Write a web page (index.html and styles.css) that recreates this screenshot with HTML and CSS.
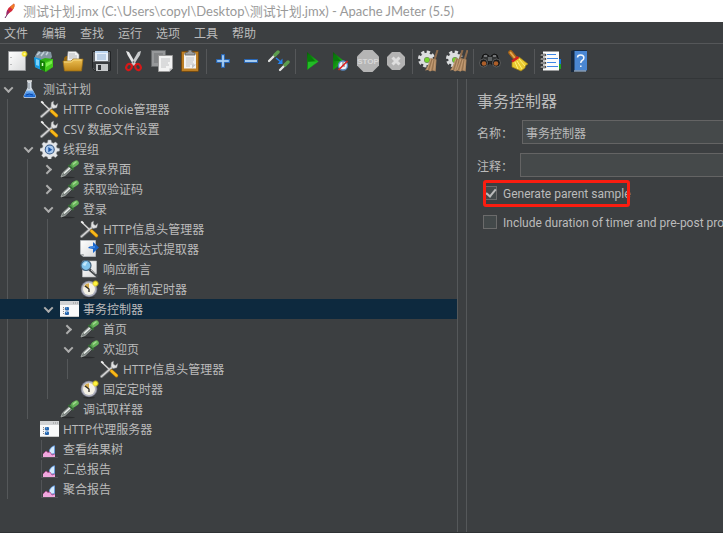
FILE: index.html
```html
<!DOCTYPE html>
<html lang="zh-CN">
<head>
    <meta charset="UTF-8">
    <meta name="viewport" content="width=device-width, initial-scale=1.0">
    <title>测试计划.jmx - Apache JMeter (5.5)</title>
    <link rel="stylesheet" href="styles.css">
</head>
<body>
    <!-- Shared icons -->
    <svg class="sprite" aria-hidden="true">
        <defs>
            <linearGradient id="g-liquid" x1="0" y1="0" x2="0" y2="1">
                <stop offset="0" stop-color="#7db8f5"/>
                <stop offset="1" stop-color="#0d5fd0"/>
            </linearGradient>
            <linearGradient id="g-green" x1="0" y1="0" x2="1" y2="1">
                <stop offset="0" stop-color="#0a5c0a"/>
                <stop offset="0.6" stop-color="#16a716"/>
                <stop offset="1" stop-color="#3fd83f"/>
            </linearGradient>
            <linearGradient id="g-folder" x1="0" y1="0" x2="0" y2="1">
                <stop offset="0" stop-color="#edc053"/>
                <stop offset="1" stop-color="#bd8417"/>
            </linearGradient>
            <linearGradient id="g-paper" x1="0" y1="0" x2="1" y2="1">
                <stop offset="0" stop-color="#ffffff"/>
                <stop offset="1" stop-color="#d9dadb"/>
            </linearGradient>
            <radialGradient id="g-glow">
                <stop offset="0" stop-color="#ffffc0"/>
                <stop offset="0.5" stop-color="#f6e21c"/>
                <stop offset="1" stop-color="#f6e21c" stop-opacity="0"/>
            </radialGradient>
            <symbol id="flask" viewBox="0 0 20 20">
                <path d="M7.500 2.500h4v6l4.500 8.500q.4 2-1.500 2h-9.500q-2 0-1.500-2l4-8.500z" fill="#d5dde5"/>
                <path d="M6.500 11.500h6.500l2.500 5q.6 1.800-1.200 1.800h-9q-1.800 0-1.200-1.800z" fill="url(#g-liquid)"/>
                <path d="M7 2h5" stroke="#f5f5f5" stroke-width="1.400"/>
                <path d="M9 4v6" stroke="#88929b" stroke-width="1"/>
                <path d="M6 16q3-2 7 0" stroke="#0643a8" fill="none"/>
            </symbol>
            <symbol id="tools" viewBox="0 0 20 20">
                <path d="M1.500 17.500L13 7.500" stroke="#77797b" stroke-width="3" stroke-linecap="round"/>
                <path d="M1.500 17.500L13 7.500" stroke="#d6d7d8" stroke-width="1.600" stroke-linecap="round"/>
                <path d="M17.800 4.500l-2.500 2-2-1.500.3-3-2.300 1.500-.3 4 2.300 2 3.500-.8z" fill="#e2e3e4" stroke="#8d8f91" stroke-width=".5"/>
                <path d="M1.500 3L10 11" stroke="#d8d8d8" stroke-width="1.500"/>
                <path d="M.5 3l1.500-1.200 2 2-1 1z" fill="#f3f3f3"/>
                <path d="M11.500 12l5 4.800" stroke="#b77a00" stroke-width="3.400" stroke-linecap="round"/>
                <path d="M11.500 12l5 4.500" stroke="#f8b91b" stroke-width="2.400" stroke-linecap="round"/>
            </symbol>
            <symbol id="gear" viewBox="0 0 20 20">
                <path d="M8 1h3l.6 2.500 1.800.7L15.600 3l2 2-1.300 2.200.7 1.700 2.500.6v2.500l-2.500.6-.7 1.800 1.300 2.100-2.100 2.100-2.100-1.300-1.800.7-.6 2.400H8.200l-.7-2.400-1.700-.7-2.200 1.300-2-2.100 1.300-2.200-.8-1.700L0 12V9.400l2.300-.6.8-1.700L1.800 5l2-2.100L6 4.200l1.600-.7z" fill="#e4e6e9" stroke="#9a9ea3" stroke-width=".5"/>
                <circle cx="9.700" cy="10.500" r="5" fill="#30527f"/>
                <circle cx="9.700" cy="10.500" r="4" fill="#a8c8ee"/>
                <path d="M8.300 8l4 2.700-4 2.500z" fill="#1f56a4"/>
            </symbol>
            <symbol id="dropper" viewBox="0 0 20 20">
                <ellipse cx="8" cy="18.500" rx="7" ry=".8" fill="#292b2c"/>
                <path d="M1 18l1.500-4 8-7.500 2.500 2.500-8 7.500z" fill="#77807c" stroke="#b1b6b3" stroke-width=".8"/>
                <path d="M4 14.500l6.500-6" stroke="#f1f3f2" stroke-width="1.500"/>
                <path d="M8.500 6l5 5" stroke="#356b34" stroke-width="2"/>
                <path d="M11.500 8l3.500-4" stroke="#4f9849" stroke-width="4.500"/>
                <path d="M14 5.300l2.300-1.500" stroke="#67b35b" stroke-width="5" stroke-linecap="round"/>
                <path d="M13.500 5l2.500-2" stroke="#a5dc91" stroke-width="1.500" stroke-linecap="round"/>
            </symbol>
            <symbol id="extract" viewBox="0 0 20 20">
                <path d="M.5 1.500h15v16H3l-2.500-2.500z" fill="url(#g-paper)" stroke="#bfc3c8" stroke-width=".7"/>
                <path d="M.7 15h3v2.500" fill="#a3a7aa"/>
                <path d="M8 9q1-2 5-2V3l6 5.500-6 5.500v-4q-3-.6-5-1z" fill="#1764cb"/>
                <path d="M10 8h5" stroke="#65a6f1"/>
            </symbol>
            <symbol id="search" viewBox="0 0 20 20">
                <path d="M2.500 2h14v16h-14z" fill="url(#g-paper)" stroke="#b9bcbf" stroke-width=".6"/>
                <path d="M10 11l7 6" stroke="#44484b" stroke-width="2.600" stroke-linecap="round"/>
                <path d="M11 11l5 4" stroke="#c7c9ca" stroke-width="1"/>
                <circle cx="6" cy="6.500" r="5" fill="#82c5ed" stroke="#44627c" stroke-width="1.200"/>
                <path d="M2.800 6q1-3.300 4.500-3l-2 4z" fill="#c5e9fc"/>
            </symbol>
            <symbol id="clock" viewBox="0 0 20 20">
                <ellipse cx="9" cy="18.800" rx="6" ry=".8" fill="#292b2c"/>
                <circle cx="9" cy="10" r="8.300" fill="#777989"/>
                <circle cx="9" cy="10" r="7.500" fill="#b2b4c0"/>
                <circle cx="9" cy="10" r="6" fill="#f5f2e5"/>
                <path d="M9 10V4.200A6 6 0 0 0 4 7.300z" fill="#d5ab4d"/>
                <path d="M5 7l4 3v3" stroke="#302d2a" stroke-width="1.300" fill="none"/>
                <circle cx="15.500" cy="4.500" r="3.600" fill="url(#g-glow)"/>
                <circle cx="15.500" cy="4.500" r="1.800" fill="#fff33f"/>
            </symbol>
            <symbol id="window" viewBox="0 0 20 20">
                <path d="M0 2h19v16H0z" fill="#f8f9fa"/>
                <path d="M0 2h19v4H0z" fill="#d0d2d4"/>
                <path d="M13 4h1m1 0h1m1 0h1" stroke="#8b8d90"/>
                <path d="M0 17.500h19" stroke="#c7c9ca"/>
                <path d="M3.500 8v7h3M3.500 10h3" stroke="#888" fill="none" stroke-dasharray="1 1"/>
                <rect x="5" y="8" width="4" height="3.500" rx="1" fill="#2866ae"/>
                <rect x="5" y="12.500" width="4" height="3.500" rx="1" fill="#2866ae"/>
                <path d="M6 9h1m-1 4.500h1" stroke="#66b8f3"/>
            </symbol>
            <symbol id="chart" viewBox="0 0 20 20">
                <path d="M1.500 1.500v17h16" stroke="#686b6e" stroke-dasharray="1 1" fill="none"/>
                <path d="M9 18v-7q3-5 6-4.500V18z" fill="#6d9edb"/>
                <path d="M10 15v-4q2-4 4-3.500V14z" fill="#d7edff"/>
                <path d="M3 18v-3l3-3 2 1.500 2-.5 2 3 3-1v3z" fill="#f0a8de"/>
                <path d="M3 15l3-3 2 1.500 2-.5 2 3 3-1" stroke="#a94a8f" fill="none" stroke-width=".8"/>
            </symbol>
            <symbol id="small-broom" viewBox="0 0 22 22">
                <path d="M19.500 0l-3 10" stroke="#8d6a4b" stroke-width="2"/>
                <path d="M12.500 8l6 1.500-.8 12-3.200-1-2.500 1-2-1.500-3 .5 3-5z" fill="#ac8660"/>
                <path d="M13 9l-4 11M15 10l-3 11M17 10l-1 10" stroke="#cda67e" stroke-width=".7"/>
                <path d="M14 9l-3.500 11M16 10l-2 11" stroke="#80603f" stroke-width=".5"/>
            </symbol>
            <symbol id="cog" viewBox="0 0 22 22">
                <circle cx="8.500" cy="9" r="7" fill="none" stroke="#dcdedf" stroke-width="3" stroke-dasharray="3.200 2.300"/>
                <circle cx="8.500" cy="9" r="6.300" fill="#dcdedf"/>
                <circle cx="9" cy="10" r="3" fill="#6b8e52"/>
                <circle cx="9" cy="10" r="2.300" fill="#75d52b"/>
            </symbol>
        </defs>
    </svg>

    <div class="window">
        <header class="titlebar">
            <svg class="feather" viewBox="0 0 16 18">
                <path d="M3 16L12 2" stroke="#702b65" stroke-width="1"/>
                <path d="M4.500 13q-.5-4 2-7L12 1.500q1.500 3-2 7.500z" fill="#d52b3c"/>
                <path d="M8 5l4-3.500q1.500 3-1.500 6z" fill="#ee7b27"/>
                <path d="M4.500 13q-.5-3 1-5l2 2z" fill="#952b75"/>
            </svg>
            <span>测试计划.jmx (C:\Users\copyl\Desktop\测试计划.jmx) - Apache JMeter (5.5)</span>
        </header>

        <nav class="menubar">
            <button>文件</button>
            <button>编辑</button>
            <button>查找</button>
            <button>运行</button>
            <button>选项</button>
            <button>工具</button>
            <button>帮助</button>
        </nav>

        <div class="toolbar" role="toolbar" aria-label="工具栏">
            <div class="group">
                <button aria-label="新建"><svg viewBox="0 0 22 22">
                    <path d="M2.500 1.500h17v19h-17z" fill="url(#g-paper)" stroke="#96989a"/>
                    <path d="M5 7v1m0 6v1" stroke="#888"/>
                    <circle cx="18.500" cy="4" r="3.500" fill="url(#g-glow)"/>
                </svg></button>
                <button aria-label="模板"><svg viewBox="0 0 22 22">
                    <path d="M1 6l3-5 4 1 3-1 6 1 1 5-8 10-5 2-4-2z" fill="#8496a3"/>
                    <path d="M3 5l3-3M7 6l3-4M12 5l2-3" stroke="#c3d0da" stroke-width="1.500"/>
                    <path d="M0 7l7 2v11l-6-3z" fill="#169be2"/>
                    <path d="M2 9l3 1v6l-3-1z" fill="#7ad2fb"/>
                    <path d="M6 10l5-2 8 1v8l-7 5-6-3z" fill="#2fb014"/>
                    <path d="M6 10l5 2v9.500l-5-3z" fill="#138006"/>
                    <path d="M11 12l8-3v8l-8 4.500z" fill="#43c91c"/>
                    <path d="M12 13l6-2.500v3L12 17z" fill="#7aec4c"/>
                    <path d="M8.500 13v3" stroke="#d5ffc3" stroke-width="1.500"/>
                </svg></button>
                <button aria-label="打开"><svg viewBox="0 0 22 22">
                    <path d="M2 8l2-2h6v3h10v5H2z" fill="#94650c"/>
                    <path d="M6 1.500h8l3 3V13H5z" fill="#f3f3f3" stroke="#999" stroke-width=".6"/>
                    <path d="M7 4h6M7 6h8M7 8h8" stroke="#b4b6b8"/>
                    <path d="M1 11h8l2-2h10l-1.500 12H2.500z" fill="url(#g-folder)" stroke="#9c6d13" stroke-width=".7"/>
                    <path d="M2 12h7.500l2-2h8" stroke="#f6dc87" fill="none"/>
                </svg></button>
                <button aria-label="保存"><svg viewBox="0 0 22 22">
                    <path d="M2.500 1.500h18v19h-16l-2-2z" fill="#6c6f72" stroke="#222426"/>
                    <path d="M5 1h13v10H5z" fill="#eaf2fb"/>
                    <path d="M5 1h13v2H5z" fill="#bcd6f1"/>
                    <path d="M7 5h9M7 7h9M7 9h9" stroke="#90afd2"/>
                    <path d="M3 12h17v8H5l-2-2z" fill="#393c3f"/>
                    <path d="M6 14h12v7H6z" fill="#c5c8ca"/>
                    <path d="M8 15h3v5H8z" fill="#33363a"/>
                </svg></button>
            </div>
            <div class="separator"></div>
            <div class="group">
                <button aria-label="剪切"><svg viewBox="0 0 22 22">
                    <path d="M3 1l3 1 7 12-2 2L4.500 5z" fill="#e5e6e7"/>
                    <path d="M18 1l-3 1-7 12 2 2L17 5z" fill="#c9cbcd"/>
                    <circle cx="10.500" cy="12" r=".8" fill="#555"/>
                    <ellipse cx="6" cy="17" rx="2.600" ry="3.200" fill="none" stroke="#d61818" stroke-width="2.200" transform="rotate(30 6 17)"/>
                    <ellipse cx="15" cy="17" rx="2.600" ry="3.200" fill="none" stroke="#d61818" stroke-width="2.200" transform="rotate(-30 15 17)"/>
                </svg></button>
                <button aria-label="复制"><svg viewBox="0 0 22 22">
                    <path d="M.5 .5h14v16H.5z" fill="#96989a" stroke="#686b6d"/>
                    <path d="M3 4h9M3 6h8M3 8h5M3 10h5M3 12h5" stroke="#6e7173"/>
                    <path d="M7.500 5.500h14v13l-3 3h-11z" fill="#f2f2f2" stroke="#999"/>
                    <path d="M10 9h9M10 11h9M10 13h7M10 15h8M10 17h5" stroke="#b6b8ba" stroke-width=".8"/>
                    <path d="M18.500 21.500v-3h3z" fill="#b5b7b9"/>
                </svg></button>
                <button aria-label="粘贴"><svg viewBox="0 0 22 22">
                    <rect x="2.500" y="1.500" width="17" height="20" rx="1" fill="#bd7f24" stroke="#754b12"/>
                    <path d="M5 3.500h12v15H5z" fill="#f2f2f2"/>
                    <path d="M7 8h8M7 10h8M7 12h7M7 14h8M7 16h4" stroke="#b5b7b9" stroke-width=".8"/>
                    <path d="M13 18.500v-4h4z" fill="#c2c4c6"/>
                    <path d="M6 5V3l3-1 1-2h2l1 2 3 1v2z" fill="#9b9d9f" stroke="#5d5f61" stroke-width=".8"/>
                </svg></button>
            </div>
            <div class="separator"></div>
            <div class="group">
                <button aria-label="展开"><svg viewBox="0 0 22 22">
                    <path d="M9.500 4.500h3v5h5v3h-5v5h-3v-5h-5v-3h5z" fill="#82b3e7" stroke="#2865b3"/>
                    <path d="M11 6v10M6 11h10" stroke="#b5d7f7"/>
                </svg></button>
                <button aria-label="折叠"><svg viewBox="0 0 22 22">
                    <path d="M4.500 9.500h13v3h-13z" fill="#a5cbef" stroke="#2865b3"/>
                </svg></button>
                <button aria-label="切换"><svg viewBox="0 0 22 22">
                    <path d="M1 11l7-7" stroke="#e4e6e5" stroke-width="2.300" stroke-linecap="round"/>
                    <path d="M7 5l3-3" stroke="#5c9e4e" stroke-width="3.400" stroke-linecap="round"/>
                    <path d="M12 20l6-6" stroke="#e4e6e5" stroke-width="2.300" stroke-linecap="round"/>
                    <path d="M17 15l3-3" stroke="#5c9e4e" stroke-width="3.400" stroke-linecap="round"/>
                    <path d="M8 8l5 4" stroke="#2682ec" stroke-width="1.600"/>
                    <path d="M14.500 8.500v5.500H9.500z" fill="#2682ec"/>
                </svg></button>
            </div>
            <div class="separator"></div>
            <div class="group">
                <button aria-label="启动"><svg viewBox="0 0 22 22">
                    <path d="M6 2l11.500 9.500L6 20z" fill="url(#g-green)"/>
                    <path d="M7 4l7 7H7z" fill="#087b0b"/>
                    <path d="M7 12h9l-9 7z" fill="#22bc27"/>
                </svg></button>
                <button aria-label="不停顿开始"><svg viewBox="0 0 22 22">
                    <path d="M4 2l11.500 9.500L4 20z" fill="url(#g-green)"/>
                    <path d="M5 4l7 7H5z" fill="#087b0b"/>
                    <circle cx="14" cy="15.500" r="4.500" fill="#edf2f8" stroke="#588ac3" stroke-width="1.300"/>
                    <path d="M14 12v4h2" stroke="#777" fill="none"/>
                    <path d="M9.500 20l9-9" stroke="#df2020" stroke-width="1.600"/>
                </svg></button>
                <button aria-label="停止"><svg viewBox="0 0 22 22">
                    <path d="M6.500 0h9L22 6.500v9L15.500 22h-9L0 15.500v-9z" fill="#b5b5b5"/>
                    <text class="stop-text" x="11" y="14" text-anchor="middle">STOP</text>
                </svg></button>
                <button aria-label="关闭"><svg viewBox="0 0 22 22">
                    <path d="M7 2h8l5 5v8l-5 5H7l-5-5V7z" fill="#b3b3b3"/>
                    <path d="M7.500 7.500l7 7m0-7l-7 7" stroke="#dedede" stroke-width="3"/>
                </svg></button>
            </div>
            <div class="separator"></div>
            <div class="group">
                <button aria-label="清除"><svg viewBox="0 0 22 22">
                    <use href="#cog"/>
                    <use href="#small-broom"/>
                </svg></button>
                <button aria-label="清除全部"><svg viewBox="0 0 22 22">
                    <use href="#cog"/>
                    <use href="#small-broom" x="-3" width="22" height="22"/>
                    <use href="#small-broom" x="2" width="22" height="22"/>
                </svg></button>
            </div>
            <div class="separator"></div>
            <div class="group">
                <button aria-label="搜索"><svg viewBox="0 0 22 22">
                    <path d="M4 5l3-1 3 2v8H1z" fill="#313334" stroke="#111"/>
                    <path d="M18 5l-3-1-3 2v8h9z" fill="#313334" stroke="#111"/>
                    <path d="M9 7h4v4H9z" fill="#5c6061"/>
                    <path d="M5 6h3m6 0h3" stroke="#8a8d8f" stroke-width="1.300"/>
                    <circle cx="4.500" cy="13" r="4" fill="#191a1b" stroke="#6a6c6d" stroke-width=".8"/>
                    <circle cx="17.500" cy="13" r="4" fill="#191a1b" stroke="#6a6c6d" stroke-width=".8"/>
                    <circle cx="5" cy="13.500" r="2.300" fill="#ae5f2a"/>
                    <circle cx="17" cy="13.500" r="2.300" fill="#ae5f2a"/>
                </svg></button>
                <button aria-label="重置搜索"><svg viewBox="0 0 22 22">
                    <path d="M3.500 2.500l5 6" stroke="#a86417" stroke-width="4.500" stroke-linecap="round"/>
                    <path d="M3.500 2.500l4 5" stroke="#e3a84d" stroke-width="2" stroke-linecap="round"/>
                    <path d="M5 12l7-5 9 7q-3 1-3 4l-4 3-9-4z" fill="#e8c92f" stroke="#a28312" stroke-width=".7"/>
                    <path d="M8 12l3 7M10 11l5 8M12 9l6 7" stroke="#fff17a" stroke-width="1"/>
                    <path d="M5 11.500l6.500-4.500" stroke="#d32121" stroke-width="2.600"/>
                </svg></button>
            </div>
            <div class="separator"></div>
            <div class="group">
                <button aria-label="函数助手"><svg viewBox="0 0 22 22">
                    <path d="M18 9h3v5h-3z" fill="#1774d8"/>
                    <path d="M18 14h3v5h-3z" fill="#1ea322"/>
                    <path d="M3 1.500h16v19H3z" fill="#fbfbfb"/>
                    <path d="M7 4.500h9M7 8.500h11M7 12.500h9M7 16.500h11" stroke="#3d86e6"/>
                    <path d="M1 5h4M1 9h4M1 13h4M1 17h4" stroke="#222" stroke-width="2.600" stroke-linecap="round"/>
                    <path d="M1 5h4M1 9h4M1 13h4M1 17h4" stroke="#eee" stroke-width="1.200" stroke-linecap="round"/>
                </svg></button>
                <button aria-label="帮助"><svg viewBox="0 0 22 22">
                    <path d="M3 1l3-1h13v20l-2 2H3z" fill="#17283d"/>
                    <path d="M6.500 1h12.500v19.500H6.500z" fill="#4a87d3"/>
                    <path d="M6 21h12" stroke="#c5d5e6"/>
                    <path d="M9.500 7.500Q9.500 5 12.700 5t3.200 2.800q0 1.800-1.800 2.700-1.300.8-1.300 2.500M12.800 15.500V17" stroke="#f4f8fc" stroke-width="1.500" fill="none"/>
                </svg></button>
            </div>
        </div>

        <main class="workspace">
            <ul class="tree" role="tree" aria-label="测试计划">
                <li role="treeitem"><button class="toggle open" aria-label="折叠"></button><svg><use href="#flask"/></svg><span>测试计划</span></li>
                <li role="treeitem"><i></i><b></b><svg><use href="#tools"/></svg><span>HTTP Cookie管理器</span></li>
                <li role="treeitem"><i></i><b></b><svg><use href="#tools"/></svg><span>CSV 数据文件设置</span></li>
                <li role="treeitem"><i></i><button class="toggle open" aria-label="折叠"></button><svg><use href="#gear"/></svg><span>线程组</span></li>
                <li role="treeitem"><i></i><i></i><button class="toggle" aria-label="展开"></button><svg><use href="#dropper"/></svg><span>登录界面</span></li>
                <li role="treeitem"><i></i><i></i><button class="toggle" aria-label="展开"></button><svg><use href="#dropper"/></svg><span>获取验证码</span></li>
                <li role="treeitem"><i></i><i></i><button class="toggle open" aria-label="折叠"></button><svg><use href="#dropper"/></svg><span>登录</span></li>
                <li role="treeitem"><i></i><i></i><i></i><b></b><svg><use href="#tools"/></svg><span>HTTP信息头管理器</span></li>
                <li role="treeitem"><i></i><i></i><i></i><b></b><svg><use href="#extract"/></svg><span>正则表达式提取器</span></li>
                <li role="treeitem"><i></i><i></i><i></i><b></b><svg><use href="#search"/></svg><span>响应断言</span></li>
                <li role="treeitem"><i></i><i></i><i></i><b></b><svg><use href="#clock"/></svg><span>统一随机定时器</span></li>
                <li role="treeitem" class="selected" aria-selected="true"><i></i><i></i><button class="toggle open" aria-label="折叠"></button><svg><use href="#window"/></svg><span>事务控制器</span></li>
                <li role="treeitem"><i></i><i></i><i></i><button class="toggle" aria-label="展开"></button><svg><use href="#dropper"/></svg><span>首页</span></li>
                <li role="treeitem"><i></i><i></i><i></i><button class="toggle open" aria-label="折叠"></button><svg><use href="#dropper"/></svg><span>欢迎页</span></li>
                <li role="treeitem"><i></i><i></i><i></i><i></i><b></b><svg><use href="#tools"/></svg><span>HTTP信息头管理器</span></li>
                <li role="treeitem"><i></i><i></i><i></i><b></b><svg><use href="#clock"/></svg><span>固定定时器</span></li>
                <li role="treeitem"><i></i><i></i><b></b><svg><use href="#dropper"/></svg><span>调试取样器</span></li>
                <li role="treeitem"><i></i><b></b><svg><use href="#window"/></svg><span>HTTP代理服务器</span></li>
                <li role="treeitem"><i></i><b></b><svg><use href="#chart"/></svg><span>查看结果树</span></li>
                <li role="treeitem"><i></i><b></b><svg><use href="#chart"/></svg><span>汇总报告</span></li>
                <li role="treeitem"><i></i><b></b><svg><use href="#chart"/></svg><span>聚合报告</span></li>
            </ul>

            <div class="splitter"></div>

            <form class="panel">
                <h1>事务控制器</h1>
                <div class="field name-field">
                    <label for="name">名称：</label>
                    <input type="text" id="name" value="事务控制器">
                </div>
                <div class="field">
                    <label for="comments">注释：</label>
                    <input type="text" id="comments">
                </div>
                <div class="option marked">
                    <input type="checkbox" id="parent" checked>
                    <label for="parent">Generate parent sample</label>
                </div>
                <div class="option">
                    <input type="checkbox" id="timers">
                    <label for="timers">Include duration of timer and pre-post processors in generated sample</label>
                </div>
            </form>
        </main>
    </div>
</body>
</html>
```
FILE: styles.css
```css
*,
*::before,
*::after {
    box-sizing: border-box;
    margin: 0;
    padding: 0;
}

body {
    background-color: #3c3f41;
    color: #bbbbbb;
    font-family: "Open Sans", "Noto Sans CJK SC", sans-serif;
    font-size: 12px;
    overflow: hidden;
}

button {
    border: none;
    background: none;
    color: inherit;
    font: inherit;
}

.sprite {
    position: absolute;
    width: 0;
    height: 0;
}

.window {
    display: flex;
    flex-direction: column;
    height: 100vh;
    border-bottom: 1px solid #2f3234;
}

/* Title bar */
.titlebar {
    display: flex;
    align-items: center;
    gap: 5px;
    height: 22px;
    padding-left: 2px;
    background-color: #ffffff;
    color: #999999;
    font-family: Lato, "Noto Sans CJK SC", sans-serif;
    font-size: 13px;
    line-height: 20px;
    white-space: nowrap;
}

.feather {
    width: 16px;
    height: 18px;
}

/* Menu */
.menubar {
    display: flex;
    align-items: center;
    gap: 14px;
    height: 22px;
    padding-left: 4px;
    border-bottom: 1px solid #555759;
}

/* Toolbar */
.toolbar {
    display: flex;
    align-items: center;
    height: 35px;
    padding-left: 3px;
    border-bottom: 1px solid #333638;
}

.group {
    display: flex;
}

.group button {
    display: flex;
    justify-content: center;
    width: 28px;
}

.group svg {
    width: 22px;
    height: 22px;
}

.stop-text {
    fill: #d8d8d8;
    font-family: "Liberation Sans", sans-serif;
    font-size: 8px;
    font-weight: bold;
}

.separator {
    width: 1px;
    height: 25px;
    margin: 0 2px;
    background-color: #555759;
}

/* Workspace */
.workspace {
    display: flex;
    flex: 1;
    min-height: 0;
}

.tree {
    flex: 0 0 457px;
    list-style: none;
}

.tree li {
    display: flex;
    align-items: center;
    height: 20px;
    line-height: 20px;
    white-space: nowrap;
}

.tree svg {
    width: 20px;
    height: 20px;
    margin-right: 3px;
}

.tree span {
    padding-top: 2px;
}

/* Indent guides */
.tree i {
    width: 13px;
    height: 20px;
    margin-left: 7px;
    border-left: 1px solid #55585a;
}

.tree b {
    width: 20px;
}

.tree .selected {
    background-color: #0d293e;
}

.tree .selected i {
    border-color: transparent;
}

.toggle {
    display: flex;
    justify-content: center;
    width: 20px;
    padding-right: 4px;
}

.toggle::before {
    content: "";
    width: 7px;
    height: 7px;
    border: solid #adadad;
    border-width: 0 2px 2px 0;
    transform: rotate(-45deg) translate(-1px, -1px);
}

.toggle.open::before {
    transform: rotate(45deg) translate(-1px, -1px);
}

.splitter {
    flex: 0 0 10px;
    border: solid #55585a;
    border-width: 0 1px;
}

/* Properties panel */
.panel {
    flex: 1;
    min-width: 0;
    padding: 10px 0 0 10px;
    overflow: hidden;
}

h1 {
    margin-bottom: 7px;
    font-size: 16px;
    font-weight: normal;
    line-height: 24px;
}

.field {
    display: flex;
    align-items: center;
    gap: 7px;
    margin-bottom: 9px;
}

.name-field {
    gap: 9px;
}

.field label {
    width: 36px;
    padding-top: 2px;
    white-space: nowrap;
}

.field input {
    flex: 1;
    min-width: 0;
    height: 24px;
    padding: 2px 3px 0;
    border: 1px solid #646464;
    border-right: none;
    background-color: #45494a;
    color: inherit;
    font: inherit;
}

.option {
    position: relative;
    display: flex;
    align-items: center;
    gap: 6px;
    height: 14px;
    margin: 0 0 15px 6px;
    font-family: Roboto, sans-serif;
    white-space: nowrap;
}

.option label {
    padding-top: 2px;
}

.option input {
    flex: none;
    width: 14px;
    height: 14px;
    border: 1px solid #6b6b6b;
    background-color: #43494a;
    appearance: none;
}

.option input:checked::before {
    content: "";
    display: block;
    width: 6px;
    height: 10px;
    margin-left: 4px;
    border: solid #bbbbbb;
    border-width: 0 2px 2px 0;
    transform: rotate(40deg);
}

/* Red highlight around the option */
.marked::after {
    content: "";
    position: absolute;
    top: -6px;
    left: 0;
    width: 147px;
    height: 27px;
    border: 3px solid #fb1d10;
    border-radius: 3px;
    pointer-events: none;
}
```
